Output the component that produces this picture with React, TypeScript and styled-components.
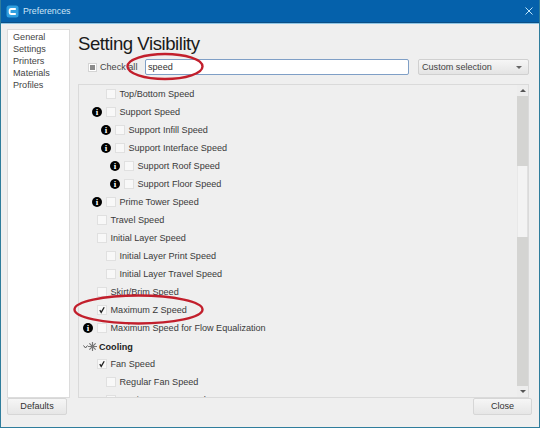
import React from "react";
import styled, { createGlobalStyle } from "styled-components";

const Global = createGlobalStyle`
  html, body { margin: 0; padding: 0; background: #efefef; }
  body { font-family: "Liberation Sans", Arial, sans-serif; }
  * { box-sizing: border-box; }
`;

const Window = styled.div`
  position: relative;
  width: 540px;
  height: 428px;
  display: flex;
  flex-direction: column;
  background: #efefef;
  border: 1px solid #2f7d9c;
  border-top: none;
  overflow: hidden;
  color: #333;
  font-size: 9.1px;
`;

const TitleBar = styled.div`
  height: 23px;
  margin: 0 -1px;
  flex: none;
  background: #0561ab;
  border-bottom: 1px solid #0b4f86;
  box-shadow: 0 1px 0 #8fc6e6;
  display: flex;
  align-items: center;
  padding: 0 7px 0 6px;
  color: #cfe6f7;
  font-size: 8.8px;
  gap: 4px;
`;

const TitleText = styled.span`
  flex: 1;
`;

const Body = styled.div`
  flex: 1;
  display: flex;
  gap: 8px;
  padding: 6px 10px 0 6px;
  min-height: 0;
`;

const Sidebar = styled.div`
  width: 63px;
  height: 369px;
  flex: none;
  background: #fff;
  border: 1px solid #dcdcdc;
  padding: 1px 0 0 5px;
  display: flex;
  flex-direction: column;
`;

const NavItem = styled.div`
  height: 12px;
  line-height: 12px;
  color: #444;
`;

const Main = styled.div`
  flex: 1;
  min-width: 0;
  display: flex;
  flex-direction: column;
  height: 369px;
`;

const Heading = styled.h1`
  margin: 0;
  height: 30px;
  line-height: 29px;
  font-size: 18.6px;
  letter-spacing: -0.46px;
  font-weight: 400;
  color: #1a1a1a;
  white-space: nowrap;
`;

const FilterRow = styled.div`
  height: 16px;
  display: flex;
  align-items: center;
  padding-left: 10px;
  margin-bottom: 9px;
`;

const CheckAllBox = styled.span`
  width: 9px;
  height: 9px;
  flex: none;
  background: #fff;
  border: 1px solid #d4d4d4;
  display: flex;
  align-items: center;
  justify-content: center;
  &::after {
    content: "";
    width: 5px;
    height: 5px;
    background: #8a8a8a;
  }
`;

const CheckAllLabel = styled.span`
  width: 48px;
  flex: none;
  padding-left: 3px;
  color: #444;
`;

const SearchInput = styled.div`
  width: 264px;
  height: 16px;
  flex: none;
  background: #fff;
  border: 1px solid #7f9fc6;
  border-radius: 2px;
  padding-left: 2px;
  line-height: 14px;
  color: #333;
`;

const Combo = styled.div`
  width: 111px;
  height: 16px;
  flex: none;
  margin-left: 9px;
  border: 1px solid #d0d0d0;
  border-radius: 2px;
  background: linear-gradient(#f6f6f6, #e4e4e4);
  display: flex;
  align-items: center;
  justify-content: space-between;
  padding: 0 6px 0 3px;
  color: #444;
`;

const ComboArrow = styled.span`
  width: 0;
  height: 0;
  border-left: 3px solid transparent;
  border-right: 3px solid transparent;
  border-top: 3px solid #666;
`;

const ListPanel = styled.div`
  flex: 1;
  min-height: 0;
  display: flex;
  border: 1px solid #dadada;
  background: #efefef;
  overflow: hidden;
`;

const List = styled.div`
  flex: 1;
  min-width: 0;
  overflow: hidden;
  padding: 0 0 0 4px;
`;

const Row = styled.div<{ $level: number }>`
  height: 18px;
  display: flex;
  align-items: center;
  padding-left: ${(p) => p.$level * 9}px;
  color: #3a3a3a;
  white-space: nowrap;
`;

const InfoSlot = styled.span`
  width: 14px;
  flex: none;
  display: flex;
`;

const InfoIcon = styled.span`
  width: 10px;
  height: 10px;
  border-radius: 50%;
  background: #000;
  color: #fff;
  font: 700 9px/10px "Liberation Serif", serif;
  text-align: center;
`;

const Check = styled.span`
  width: 10px;
  height: 10px;
  flex: none;
  margin-right: 3.5px;
  background: #f8f8f8;
  border: 1px solid #e0e0e0;
  display: flex;
  align-items: center;
  justify-content: center;
`;

const CategoryRow = styled.div`
  height: 18px;
  padding-top: 1px;
  display: flex;
  align-items: center;
  color: #222;
  font-weight: 700;
  white-space: nowrap;
`;

const CategoryLabel = styled.span`
  padding-left: 2px;
`;

const Scrollbar = styled.div`
  width: 11px;
  flex: none;
  display: flex;
  flex-direction: column;
  background: #efefef;
`;

const ScrollButton = styled.div`
  height: 11px;
  flex: none;
  background: #ededed;
  display: flex;
  align-items: center;
  justify-content: center;
`;

const ScrollUp = styled.span`
  border-left: 3px solid transparent;
  border-right: 3px solid transparent;
  border-bottom: 3px solid #555;
`;

const ScrollDown = styled.span`
  border-left: 3px solid transparent;
  border-right: 3px solid transparent;
  border-top: 3px solid #555;
`;

const ScrollTrack = styled.div`
  flex: 1;
  display: flex;
  flex-direction: column;
  padding-top: 70px;
  background: #d4d4d2;
`;

const ScrollThumb = styled.div`
  height: 71px;
  background: #f3f3f3;
  border-left: 1px solid #e8e8e8;
  border-right: 1px solid #e0e0e0;
`;

const Footer = styled.div`
  height: 35px;
  flex: none;
  display: flex;
  justify-content: space-between;
  padding: 6px 7px 0 6px;
`;

const Button = styled.div<{ $width: number }>`
  width: ${(p) => p.$width}px;
  height: 17px;
  border: 1px solid #d6d6d6;
  border-radius: 2px;
  background: linear-gradient(#f6f6f6, #e6e6e6);
  text-align: center;
  line-height: 15px;
  color: #333;
`;

const Annotations = styled.svg`
  position: absolute;
  top: 0;
  left: -1px;
  pointer-events: none;
`;

type Item = { label: string; level: number; info?: boolean; checked?: boolean };

const rowsA: Item[] = [
  { label: "Top/Bottom Speed", level: 1 },
  { label: "Support Speed", level: 1, info: true },
  { label: "Support Infill Speed", level: 2, info: true },
  { label: "Support Interface Speed", level: 2, info: true },
  { label: "Support Roof Speed", level: 3, info: true },
  { label: "Support Floor Speed", level: 3, info: true },
  { label: "Prime Tower Speed", level: 1, info: true },
  { label: "Travel Speed", level: 0 },
  { label: "Initial Layer Speed", level: 0 },
  { label: "Initial Layer Print Speed", level: 1 },
  { label: "Initial Layer Travel Speed", level: 1 },
  { label: "Skirt/Brim Speed", level: 0 },
  { label: "Maximum Z Speed", level: 0, checked: true },
  { label: "Maximum Speed for Flow Equalization", level: 0, info: true },
];

const rowsB: Item[] = [
  { label: "Fan Speed", level: 0, checked: true },
  { label: "Regular Fan Speed", level: 1 },
  { label: "Maximum Fan Speed", level: 1 },
];

const Tick = () => (
  <svg width="8" height="8" viewBox="0 0 8 8">
    <path d="M1.8 4.2 L3.2 6.4 L6.2 1.2" fill="none" stroke="#222" strokeWidth="1.3" />
  </svg>
);

const SettingRow = ({ item }: { item: Item }) => (
  <Row $level={item.level}>
    <InfoSlot>{item.info && <InfoIcon>i</InfoIcon>}</InfoSlot>
    <Check>{item.checked && <Tick />}</Check>
    {item.label}
  </Row>
);

const navItems = ["General", "Settings", "Printers", "Materials", "Profiles"];

export default function App() {
  return (
    <>
      <Global />
      <Window>
        <TitleBar>
          <svg width="13" height="13" viewBox="0 0 13 13">
            <rect x="0.5" y="0.5" width="12" height="12" rx="2.5" fill="#2f9fe0" />
            <path d="M9.8 4 H5 Q3.6 4 3.6 5.4 V7.6 Q3.6 9 5 9 H9.8" fill="none" stroke="#fff" strokeWidth="1.8" />
          </svg>
          <TitleText>Preferences</TitleText>
          <svg width="8" height="8" viewBox="0 0 8 8">
            <path d="M0.5 0.5 L7.5 7.5 M7.5 0.5 L0.5 7.5" stroke="#bfe6fb" strokeWidth="1" />
          </svg>
        </TitleBar>
        <Body>
          <Sidebar>
            {navItems.map((n) => (
              <NavItem key={n}>{n}</NavItem>
            ))}
          </Sidebar>
          <Main>
            <Heading>Setting Visibility</Heading>
            <FilterRow>
              <CheckAllBox />
              <CheckAllLabel>Check all</CheckAllLabel>
              <SearchInput>speed</SearchInput>
              <Combo>
                Custom selection
                <ComboArrow />
              </Combo>
            </FilterRow>
            <ListPanel>
              <List>
                {rowsA.map((r) => (
                  <SettingRow key={r.label} item={r} />
                ))}
                <CategoryRow>
                  <svg width="5" height="6" viewBox="0 0 5 6">
                    <path d="M0.5 1.5 L2.5 4 L4.5 1.5" fill="none" stroke="#555" />
                  </svg>
                  <svg width="9" height="9" viewBox="0 0 10 10">
                    <g stroke="#777" strokeWidth="1.3">
                      <path d="M5 0 V10 M0 5 H10 M1.5 1.5 L8.5 8.5 M8.5 1.5 L1.5 8.5" />
                    </g>
                  </svg>
                  <CategoryLabel>Cooling</CategoryLabel>
                </CategoryRow>
                {rowsB.map((r) => (
                  <SettingRow key={r.label} item={r} />
                ))}
              </List>
              <Scrollbar>
                <ScrollButton>
                  <ScrollUp />
                </ScrollButton>
                <ScrollTrack>
                  <ScrollThumb />
                </ScrollTrack>
                <ScrollButton>
                  <ScrollDown />
                </ScrollButton>
              </Scrollbar>
            </ListPanel>
          </Main>
        </Body>
        <Footer>
          <Button $width={60}>Defaults</Button>
          <Button $width={59}>Close</Button>
        </Footer>
        <Annotations width="540" height="428" viewBox="0 0 540 428">
          <ellipse cx="165" cy="66.5" rx="37.5" ry="12.5" fill="none" stroke="#c21f2c" strokeWidth="2.4" />
          <ellipse cx="138.5" cy="309.5" rx="64" ry="14" fill="none" stroke="#c21f2c" strokeWidth="2.4" />
        </Annotations>
      </Window>
    </>
  );
}
